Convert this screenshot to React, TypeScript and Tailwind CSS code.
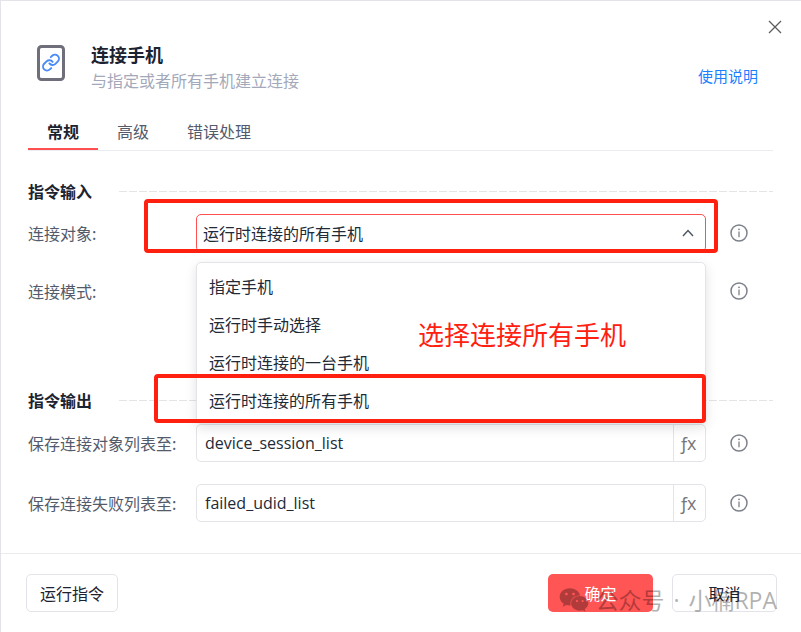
import type { ReactNode } from 'react'
import { FaWeixin } from 'react-icons/fa'

const TARGET_OPTIONS = ['指定手机', '运行时手动选择', '运行时连接的一台手机', '运行时连接的所有手机']
const TABS = ['常规', '高级', '错误处理']

function PhoneLinkIcon() {
  return (
    <svg className="mt-1 h-9 w-7 shrink-0" viewBox="0 0 28 36" fill="none">
      <rect x="1.5" y="1.5" width="25" height="33" rx="3" stroke="#6f6f7b" strokeWidth="3" />
      <g
        transform="translate(4.4 8) scale(0.8)"
        stroke="#4a8bf8"
        strokeWidth="2.4"
        strokeLinecap="round"
        strokeLinejoin="round"
      >
        <path d="M10 13a5 5 0 0 0 7.54.54l3-3a5 5 0 0 0-7.07-7.07l-1.72 1.71" />
        <path d="M14 11a5 5 0 0 0-7.54-.54l-3 3a5 5 0 0 0 7.07 7.07l1.71-1.71" />
      </g>
    </svg>
  )
}

function InfoButton({ label }: { label: string }) {
  return (
    <button type="button" aria-label={label} className="ml-6 mr-[25px] shrink-0">
      <svg className="block h-[18px] w-[18px]" viewBox="0 0 18 18" fill="none">
        <circle cx="9" cy="9" r="8" stroke="#7d818a" strokeWidth="1.5" />
        <circle cx="9" cy="5.3" r="0.9" fill="#7d818a" />
        <path d="M9 7.5v5.7" stroke="#7d818a" strokeWidth="1.3" />
      </svg>
    </button>
  )
}

function SectionTitle({ children }: { children: ReactNode }) {
  return (
    <div className="mb-[11px] flex items-center">
      <h2 className="w-[91px] shrink-0 font-bold leading-6 text-[#1c2330]">{children}</h2>
      <div className="h-px flex-1 bg-[repeating-linear-gradient(90deg,#e4e4e7_0_8px,transparent_8px_10px)]" />
    </div>
  )
}

function OutputField({ id, label, value }: { id: string; label: string; value: string }) {
  return (
    <div className="flex h-[38px] items-center">
      <label htmlFor={id} className="w-42 shrink-0 text-[#535b6b]">
        {label}
      </label>
      <div className="flex h-full min-w-0 flex-1 rounded-[5px] border border-[#e3e4e8]">
        <input
          id={id}
          defaultValue={value}
          className="min-w-0 flex-1 bg-transparent px-2 font-['Open_Sans',sans-serif] text-[#222a38] outline-none"
        />
        <button
          type="button"
          aria-label="表达式"
          className="w-8 border-l border-[#e3e4e8] pr-1 font-['Open_Sans',sans-serif] text-lg font-medium leading-6 text-[#777]"
        >
          <span className="-mr-0.5">ƒ</span>x
        </button>
      </div>
      <InfoButton label={`${label}说明`} />
    </div>
  )
}

export default function App() {
  return (
    <div className="min-h-screen border-l border-t border-[#e3e3e9] bg-white font-['Noto_Sans_CJK_SC',sans-serif] text-base">
      <div className="flex justify-end pr-[17px] pt-[17px]">
        <button type="button" aria-label="关闭" className="h-[18px] w-[18px]">
          <svg className="block" viewBox="0 0 18 18" fill="none" stroke="#5c5c5c" strokeWidth="1.3">
            <path d="M3 3l12 12M15 3L3 15" />
          </svg>
        </button>
      </div>

      <header className="mt-[5px] flex pl-9 pr-[43px]">
        <PhoneLinkIcon />
        <div className="ml-[26px] flex-1">
          <h1 className="text-lg font-bold leading-[26px] text-[#1c2330]">连接手机</h1>
          <p className="leading-[26px] text-[#a3a9ba]">与指定或者所有手机建立连接</p>
        </div>
        <a href="#help" className="mb-[7px] self-end text-[15px] leading-5 text-[#1a80ff]">
          使用说明
        </a>
      </header>

      <nav className="ml-[27px] mr-7 mt-[21px] flex border-b border-[#ebebf2]">
        {TABS.map((tab, i) => (
          <button
            key={tab}
            type="button"
            className={
              i === 0
                ? 'h-9 border-b-2 border-[#ff5050] px-[19px] font-bold text-[#1c2330]'
                : 'h-9 border-b-2 border-transparent px-[19px] text-[#535b6b]'
            }
          >
            {tab}
          </button>
        ))}
      </nav>

      <main className="ml-[27px] mr-7 pt-7">
        <SectionTitle>指令输入</SectionTitle>
        <div className="flex h-[38px] items-center">
          <label htmlFor="target" className="w-42 shrink-0 text-[#535b6b]">
            连接对象:
          </label>
          <div className="relative h-full min-w-0 flex-1">
            <select
              id="target"
              defaultValue={TARGET_OPTIONS[3]}
              className="h-full w-full appearance-none rounded-[5px] border border-[#ff5050] bg-white px-1.5 text-[#222a38] outline-none"
            >
              {TARGET_OPTIONS.map((option) => (
                <option key={option}>{option}</option>
              ))}
            </select>
            <svg
              className="pointer-events-none absolute right-3 top-3 h-3 w-3"
              viewBox="0 0 12 12"
              fill="none"
              stroke="#4b5563"
              strokeWidth="1.4"
            >
              <path d="M1 10l5-5.5L11 10" />
            </svg>
            {/* 红框标注 */}
            <div className="pointer-events-none absolute -bottom-px -left-13 -right-3 -top-[15px] rounded-[4px] border-4 border-[#ff2010]" />

            {/* 下拉选项 */}
            <ul
              role="listbox"
              aria-label="连接对象"
              className="absolute left-0 right-0 top-12 z-10 rounded-[5px] border border-[#e3e4e8] bg-white py-1 shadow-[0_4px_12px_rgba(0,0,0,0.12)]"
            >
              {TARGET_OPTIONS.map((option, i) => (
                <li
                  key={option}
                  role="option"
                  aria-selected={i === 3}
                  className="relative px-3 leading-[38px] text-[#222a38]"
                >
                  {option}
                  {i === 3 && (
                    <div className="pointer-events-none absolute -bottom-1 -left-[43px] -right-px -top-[7px] rounded-[4px] border-4 border-[#ff2010]" />
                  )}
                </li>
              ))}
              <li
                role="presentation"
                className="pointer-events-none absolute left-[221px] top-[51px] whitespace-nowrap text-[26px] leading-10 text-[#ff2010]"
              >
                选择连接所有手机
              </li>
            </ul>
          </div>
          <InfoButton label="连接对象说明" />
        </div>

        <div className="mt-5 flex h-[38px] items-center justify-between">
          <span className="text-[#535b6b]">连接模式:</span>
          <InfoButton label="连接模式说明" />
        </div>

        <section className="mt-[78px]">
          <SectionTitle>指令输出</SectionTitle>
          <div className="flex flex-col gap-[22px] pt-px">
            <OutputField id="session-list" label="保存连接对象列表至:" value="device_session_list" />
            <OutputField id="failed-list" label="保存连接失败列表至:" value="failed_udid_list" />
          </div>
        </section>
      </main>

      <footer className="relative mt-[31px] flex gap-[19px] border-t border-[#ebebee] pb-5 pl-[25px] pr-6 pt-5 text-[#1c2330]">
        <button type="button" className="h-[38px] w-[92px] rounded-[5px] border border-[#e3e3e9]">
          运行指令
        </button>
        <button type="button" className="ml-auto h-[38px] w-[105px] rounded-[5px] bg-[#ff5555] text-white">
          确定
        </button>
        <button type="button" className="h-[38px] w-[105px] rounded-[5px] border border-[#e3e3e9]">
          取消
        </button>
        {/* 水印 */}
        <div className="pointer-events-none absolute right-6 top-[30px] flex items-center whitespace-nowrap font-['Open_Sans','Noto_Sans_CJK_SC',sans-serif] text-[23px] leading-8 text-black opacity-30">
          <FaWeixin className="mr-1.5 h-[30px] w-[30px]" />
          <span>
            公众号<span className="mx-[3px]"> · </span>小楠RPA
          </span>
        </div>
      </footer>
    </div>
  )
}
